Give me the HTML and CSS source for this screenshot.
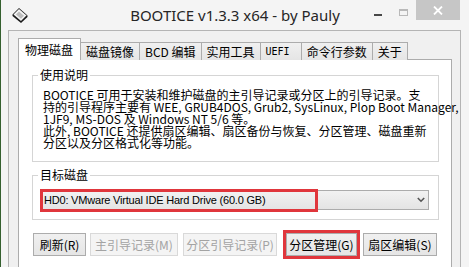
FILE: index.html
```html
<!DOCTYPE html>
<html lang="zh-CN">
<head>
    <meta charset="UTF-8">
    <title>BOOTICE v1.3.3 x64 - by Pauly</title>
    <link rel="stylesheet" href="styles.css">
</head>
<body>
    <div class="window">
        <div class="titlebar">
            <svg class="app-icon" width="16" height="16" viewBox="0 0 16 16">
                <path d="M0.5 7.5 L7 1 L15.5 8.5 L15.5 10 L9 16 L0.5 9 Z" fill="#1a1a1a"/>
                <path d="M1.5 7.5 L7 2 L14.5 8.5 L9 14 Z" fill="#f4f4f4"/>
                <path d="M4 7.5 L7 4.5 L12 8.8 L9 11.8 Z" fill="#bdbdbd"/>
                <path d="M9 14 L14.5 8.5" stroke="#777" stroke-width="0.8"/>
            </svg>
            <div class="title">BOOTICE v1.3.3 x64 - by Pauly</div>
            <div class="controls">
                <span class="ctl ctl-min"></span>
                <span class="ctl ctl-max"></span>
                <span class="ctl ctl-close">
                    <svg width="10" height="9" viewBox="0 0 10 9">
                        <path d="M1 0.5 L9 8.5 M9 0.5 L1 8.5" stroke="#fff" stroke-width="1.8"/>
                    </svg>
                </span>
            </div>
        </div>

        <div class="frame">
            <div class="client">
                <div class="tabs">
                    <div class="tab active">物理磁盘</div>
                    <div class="tab">磁盘镜像</div>
                    <div class="tab">BCD 编辑</div>
                    <div class="tab">实用工具</div>
                    <div class="tab tab-uefi">UEFI</div>
                    <div class="tab">命令行参数</div>
                    <div class="tab">关于</div>
                </div>

                <div class="panel">
                    <fieldset class="group">
                        <legend>使用说明</legend>
                        <p class="info">BOOTICE 可用于安装和维护磁盘的主引导记录或分区上的引导记录。支<br>持的引导程序主要有 WEE, GRUB4DOS, Grub2, SysLinux, Plop Boot Manager,<br>1JF9, MS-DOS 及 Windows NT 5/6 等。<br>此外, BOOTICE 还提供扇区编辑、扇区备份与恢复、分区管理、磁盘重新<br>分区以及分区格式化等功能。</p>
                    </fieldset>

                    <fieldset class="group group-disk">
                        <legend>目标磁盘</legend>
                        <div class="disk-body">
                            <div class="combo">
                                <span class="combo-text">HD0: VMware Virtual IDE Hard Drive (60.0 GB)</span>
                                <span class="mark mark-combo"></span>
                                <svg class="combo-arrow" width="8" height="6" viewBox="0 0 8 6">
                                    <path d="M0.8 1 L4 4.2 L7.2 1" fill="none" stroke="#555" stroke-width="1.6"/>
                                </svg>
                            </div>
                        </div>
                    </fieldset>

                    <div class="actions">
                        <button class="btn btn-refresh">刷新(R)</button>
                        <button class="btn btn-mbr" disabled>主引导记录(M)</button>
                        <button class="btn btn-pbr" disabled>分区引导记录(P)</button>
                        <span class="btn-mark">
                            <button class="btn btn-part">分区管理(G)</button>
                        </span>
                        <button class="btn btn-sector">扇区编辑(S)</button>
                    </div>
                </div>
            </div>
        </div>
    </div>
</body>
</html>
```

FILE: styles.css
```css
body {
    margin: 0;
    width: 469px;
    height: 267px;
    overflow: hidden;
    font-family: "Noto Sans CJK SC", sans-serif;
    font-size: 12px;
    color: #000;
    background-color: #f4f4f4;
}

.window {
    height: 300px;
    border-left: 1px solid #35602f;
    background-color: #f4f4f4;
}

/* title bar */

.titlebar {
    display: grid;
    grid-template-columns: 1fr auto 1fr;
    height: 30px;
}

.app-icon {
    margin: 7px 0 0 11px;
}

.title {
    font-family: "Noto Sans", sans-serif;
    font-size: 15px;
    line-height: 30px;
    color: #262626;
}

.controls {
    display: flex;
    justify-content: flex-end;
    align-items: flex-start;
    padding-right: 9px;
}

.ctl {
    display: flex;
    justify-content: center;
    align-items: flex-start;
    height: 20px;
    box-sizing: border-box;
}

.ctl-min {
    width: 26px;
    padding-top: 14px;
}

.ctl-min::before {
    content: "";
    width: 8px;
    height: 2px;
    background-color: #474747;
}

.ctl-max {
    width: 25px;
    padding-top: 9px;
}

.ctl-max::before {
    content: "";
    width: 9px;
    height: 7px;
    box-sizing: border-box;
    border: 1px solid #b9b9b9;
    border-top-width: 2px;
}

.ctl-close {
    width: 44px;
    padding-top: 6px;
    background-color: #c6c6c6;
}

/* client area */

.frame {
    padding: 0 8px 0 7px;
}

.client {
    height: 270px;
    padding: 7px 8px 0 9px;
    border: 1px solid #b4b4b4;
    background-color: #f0f0f0;
}

.tabs {
    display: flex;
    align-items: flex-end;
    position: relative;
    z-index: 1;
    margin-bottom: -1px;
}

.tab {
    padding: 2px 5px 1px;
    line-height: 14px;
    border: 1px solid #acacac;
    border-bottom: none;
    background: linear-gradient(#f0f0f0, #e5e5e5);
    white-space: nowrap;
}

.tab + .tab {
    margin-left: -1px;
}

.tab.active {
    padding: 4px 7px 3px 6px;
    background: #fff;
}

.tab-uefi {
    padding: 2px 11px 1px 5px;
    font-family: "DejaVu Sans Mono", monospace;
    font-size: 10px;
}

.panel {
    height: 220px;
    padding: 8px 12px 0 13px;
    border: 1px solid #acacac;
    background-color: #fff;
}

/* group boxes */

.group {
    margin: 0;
    padding: 0;
    min-width: 0;
    border: 1px solid #d5d5d5;
}

.group legend {
    margin-left: 5px;
    padding: 0 2px;
    line-height: 14px;
}

.info {
    margin: 0;
    padding: 7px 10px 12px;
    line-height: 12px;
    white-space: nowrap;
}

.group-disk {
    margin-top: 6px;
}

.disk-body {
    padding: 8px 9px 9px 7px;
}

.combo {
    position: relative;
    display: flex;
    align-items: center;
    height: 20px;
    box-sizing: border-box;
    border: 1px solid #acacac;
    background: linear-gradient(#f2f2f2, #e4e4e4);
}

.combo-text {
    padding-left: 3px;
    font-family: "Liberation Sans", Arial, sans-serif;
    font-size: 11px;
    letter-spacing: -0.2px;
    white-space: nowrap;
}

.combo-arrow {
    margin-left: auto;
    margin-right: 3px;
}

.mark {
    position: absolute;
    box-sizing: border-box;
    border: 3px solid #e0363c;
}

.mark-combo {
    left: -1px;
    top: -2px;
    width: 278px;
    height: 23px;
}

/* buttons */

.actions {
    display: flex;
    align-items: center;
    gap: 4px;
    margin-top: 10px;
    padding-left: 1px;
}

.btn {
    height: 23px;
    padding: 0;
    border: 1px solid #acacac;
    background: linear-gradient(#f0f0f0, #e5e5e5);
    font-family: inherit;
    font-size: 12px;
    color: #000;
    white-space: nowrap;
}

.btn:disabled {
    border-color: #d9d9d9;
    background: #f4f4f4;
    color: #a3a3a3;
}

.btn-refresh { width: 53px; }
.btn-mbr { width: 88px; }
.btn-pbr { width: 94px; margin-left: 1px; }
.btn-part { width: 71px; }
.btn-sector { width: 74px; margin-left: -1px; }

.btn-mark {
    display: flex;
    margin-left: 2px;
    border: 3px solid #e0363c;
}
```
